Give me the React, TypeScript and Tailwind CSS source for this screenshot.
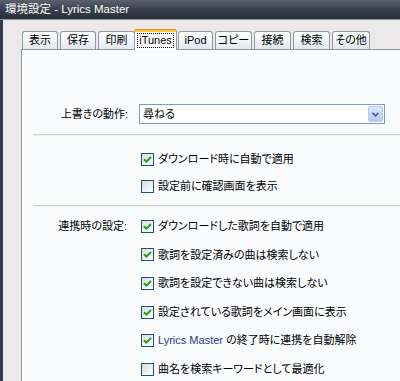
import React from "react";

const font = "font-['Liberation_Sans','Noto_Sans_CJK_JP',sans-serif] [font-feature-settings:'palt']";

const tabs = [
  { label: "表示", w: "w-[36px]" },
  { label: "保存", w: "w-[36px]" },
  { label: "印刷", w: "w-[37px]" },
  { label: "iTunes", w: "w-[43px]", active: true },
  { label: "iPod", w: "w-[35px]" },
  { label: "コピー", w: "w-[37px]" },
  { label: "接続", w: "w-[37px]" },
  { label: "検索", w: "w-[37px]" },
  { label: "その他", w: "w-[38px]" },
];

const Checkbox = ({ checked }: { checked: boolean }) => (
  <span className="relative flex h-[13px] w-[13px] shrink-0 items-center justify-center border border-[#1c5180] bg-gradient-to-br from-[#dcdcd7] to-[#ffffff]">
    {checked && (
      <svg width="9" height="9" viewBox="0 0 9 9">
        <path d="M1 4.2 L3.4 6.6 L8 2" stroke="#21a121" strokeWidth="2" fill="none" />
      </svg>
    )}
  </span>
);

const CheckRow = ({
  label,
  checked,
  h,
  children,
}: {
  label?: string;
  checked: boolean;
  h: string;
  children: React.ReactNode;
}) => (
  <div className={`flex ${h} items-center`}>
    <div className="w-[106px] shrink-0 pr-[1px] text-right">{label}</div>
    <div className="ml-[13px] flex items-center gap-[4px]">
      <Checkbox checked={checked} />
      <span className="whitespace-nowrap">{children}</span>
    </div>
  </div>
);

export default function App() {
  return (
    <div className={`flex h-[381px] w-[400px] flex-col overflow-hidden bg-[#ebe9e9] text-[11px] text-black ${font}`}>
      <div className="flex h-[19px] shrink-0 items-center bg-gradient-to-b from-[#5a6170] via-[#3a404c] to-[#2a2f38] pl-[5px] text-[11.5px] text-white">
        環境設定 - Lyrics Master
      </div>
      <div className="h-[1px] shrink-0 bg-[#8a909a]" />
      <div className="flex flex-1">
        <div className="w-[3px] bg-[#353b46]" />
        <div className="flex flex-1 flex-col pl-[18px]">
          <div className="flex h-[29px] items-end pl-[1px]">
            {tabs.map((t) =>
              t.active ? (
                <div
                  key={t.label}
                  className={`relative z-10 -mx-[1px] -mb-[1px] flex h-[21px] ${t.w} shrink-0 flex-col rounded-t-[3px] border-x border-[#919b9c] bg-white`}
                >
                  <div className="h-[1px] rounded-t-[3px] bg-[#e68b2c]" />
                  <div className="h-[2px] bg-[#ffc83c]" />
                  <div className="flex flex-1 items-start justify-center pt-[1px]">
                    <span className="border border-dotted border-black px-[1px] leading-[13px]">{t.label}</span>
                  </div>
                </div>
              ) : (
                <div
                  key={t.label}
                  className={`ml-[2px] flex h-[18px] ${t.w} shrink-0 items-center justify-center rounded-t-[3px] border border-b-0 border-[#919b9c] bg-gradient-to-b from-[#ffffff] to-[#e3e8f0] first:ml-0`}
                >
                  {t.label}
                </div>
              )
            )}
          </div>
          <div className="flex flex-1 flex-col border-l border-t border-[#919b9c] bg-[#fafbfd]">
            <div className="mt-[54px] flex h-[20px] items-center">
              <div className="w-[106px] shrink-0 text-right">上書きの動作:</div>
              <div className="ml-[11px] flex h-[20px] w-[246px] items-center justify-between border border-[#7f9db9] bg-white pl-[3px] pr-[1px]">
                <span>尋ねる</span>
                <span className="flex h-[16px] w-[15px] items-center justify-center rounded-[2px] border border-[#b9c9ef] bg-gradient-to-b from-[#dbe6fd] to-[#b5c9f7]">
                  <svg width="7" height="5" viewBox="0 0 7 5">
                    <path d="M0.5 0.8 L3.5 3.8 L6.5 0.8" stroke="#4d6185" strokeWidth="1.6" fill="none" />
                  </svg>
                </span>
              </div>
            </div>
            <div className="ml-[11px] mt-[10px] h-[2px] shrink-0 border-t border-[#d0d0cc] bg-[#f0f0ee]" />
            <div className="mt-[10px]">
              <CheckRow h="h-[27px]" checked>
                ダウンロード時に自動で適用
              </CheckRow>
              <CheckRow h="h-[27px]" checked={false}>
                設定前に確認画面を表示
              </CheckRow>
            </div>
            <div className="ml-[11px] mt-[5px] h-[2px] shrink-0 border-t border-[#d0d0cc] bg-[#f0f0ee]" />
            <div className="mt-[5px]">
              <CheckRow h="h-[28.6px]" label="連携時の設定:" checked>
                ダウンロードした歌詞を自動で適用
              </CheckRow>
              <CheckRow h="h-[28.6px]" checked>
                歌詞を設定済みの曲は検索しない
              </CheckRow>
              <CheckRow h="h-[28.6px]" checked>
                歌詞を設定できない曲は検索しない
              </CheckRow>
              <CheckRow h="h-[28.6px]" checked>
                設定されている歌詞をメイン画面に表示
              </CheckRow>
              <CheckRow h="h-[28.6px]" checked>
                <span className="text-[#1f3c88]">Lyrics Master</span> の終了時に連携を自動解除
              </CheckRow>
              <CheckRow h="h-[28.6px]" checked={false}>
                曲名を検索キーワードとして最適化
              </CheckRow>
            </div>
          </div>
        </div>
      </div>
    </div>
  );
}
